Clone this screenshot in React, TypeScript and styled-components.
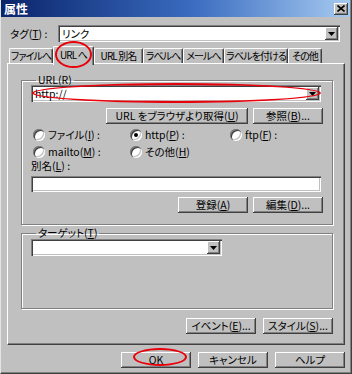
import styled, { createGlobalStyle } from "styled-components";

const FACE = "#C0C0C0";
const SHADOW = "#808080";
const DARK = "#404040";
const LIGHT = "#FFFFFF";
const RED = "#E8000B";

const GlobalStyle = createGlobalStyle`
  body { margin: 0; background: ${FACE}; }
  * { box-sizing: border-box; }
`;

const Window = styled.div`
  position: relative;
  width: 352px;
  height: 374px;
  background: ${FACE};
  border-left: 1px solid #e4e4e4;
  border-right: 1px solid ${DARK};
  border-bottom: 1px solid ${DARK};
  box-shadow: inset -1px -1px 0 ${SHADOW};
  font-family: "Noto Sans CJK JP", "Liberation Sans", sans-serif;
  font-feature-settings: "palt" 1;
  font-size: 10.5px;
  line-height: 12px;
  color: #000;
  display: flex;
  flex-direction: column;
  overflow: hidden;
`;

const TitleBar = styled.div`
  height: 17px;
  margin-right: 1px;
  display: flex;
  align-items: center;
  justify-content: space-between;
  padding: 0 2px 0 3px;
  background: linear-gradient(to right, #0a246a 0%, #3a6cc0 55%, #a6caf0 100%);
  color: ${LIGHT};
  font-size: 12px;
  font-weight: bold;
`;

const CloseButton = styled.div`
  width: 14px;
  height: 12px;
  background: ${FACE};
  display: flex;
  align-items: center;
  justify-content: center;
  box-shadow: inset -1px -1px 0 ${DARK}, inset 1px 1px 0 ${LIGHT},
    inset -2px -2px 0 ${SHADOW};
`;

const Body = styled.div`
  display: flex;
  flex-direction: column;
  padding: 0 6px 0 6px;
`;

const TagRow = styled.div`
  display: flex;
  align-items: center;
  margin-top: 8px;
  padding-left: 3px;
`;

const TagLabel = styled.span`
  width: 48px;
`;

const Combo = styled.div<{ $width: number }>`
  width: ${(p) => p.$width}px;
  height: 17px;
  display: flex;
  align-items: stretch;
  padding: 2px;
  background: ${LIGHT};
  box-shadow: inset 1px 1px 0 ${SHADOW}, inset 2px 2px 0 ${DARK},
    inset -1px -1px 0 ${LIGHT}, inset -2px -2px 0 ${FACE};
`;

const ComboText = styled.div`
  flex: 1;
  padding-left: 2px;
  display: flex;
  align-items: center;
  white-space: nowrap;
`;

const ArrowButton = styled.div`
  width: 13px;
  background: ${FACE};
  display: flex;
  align-items: center;
  justify-content: center;
  box-shadow: inset -1px -1px 0 ${DARK}, inset 1px 1px 0 ${LIGHT},
    inset -2px -2px 0 ${SHADOW};
`;

const TabStrip = styled.div`
  display: flex;
  align-items: flex-end;
  height: 17px;
  margin-top: 4px;
  padding-left: 2px;
  position: relative;
  z-index: 1;
`;

const Tab = styled.div<{ $width: number; $active?: boolean }>`
  width: ${(p) => p.$width}px;
  height: ${(p) => (p.$active ? 19 : 15)}px;
  margin-bottom: ${(p) => (p.$active ? -2 : 0)}px;
  display: flex;
  align-items: center;
  justify-content: center;
  padding-bottom: ${(p) => (p.$active ? 3 : 0)}px;
  background: ${FACE};
  border-top: 1px solid ${LIGHT};
  border-left: 1px solid ${LIGHT};
  border-right: 1px solid ${DARK};
  box-shadow: inset -1px 0 0 ${SHADOW};
  border-top-left-radius: 2px;
  border-top-right-radius: 2px;
  white-space: nowrap;
  font-size: 10px;
  letter-spacing: -0.9px;
`;

const Panel = styled.div`
  width: 338px;
  height: 282px;
  display: flex;
  flex-direction: column;
  padding: 10px 11px 0 13px;
  border-top: 1px solid ${LIGHT};
  border-left: 1px solid ${LIGHT};
  border-right: 1px solid ${DARK};
  border-bottom: 1px solid ${DARK};
  box-shadow: inset -1px -1px 0 ${SHADOW};
`;

const Group = styled.fieldset<{ $height: number }>`
  margin: 0;
  height: ${(p) => p.$height}px;
  padding: 0 9px 0 9px;
  border: 1px solid ${SHADOW};
  box-shadow: inset 1px 1px 0 ${LIGHT}, 1px 1px 0 ${LIGHT};
  display: flex;
  flex-direction: column;
  min-width: 0;
`;

const Legend = styled.legend`
  padding: 0 2px;
  margin-left: 5px;
  line-height: 12px;
`;

const Spaced = styled.div<{ $top: number }>`
  margin-top: ${(p) => p.$top}px;
`;

const ButtonRow = styled.div<{ $top: number; $gap: number }>`
  display: flex;
  justify-content: flex-end;
  gap: ${(p) => p.$gap}px;
  margin-top: ${(p) => p.$top}px;
`;

const Button = styled.div<{ $width: number }>`
  width: ${(p) => p.$width}px;
  height: 16px;
  display: flex;
  align-items: center;
  justify-content: center;
  background: ${FACE};
  box-shadow: inset -1px -1px 0 ${DARK}, inset 1px 1px 0 ${LIGHT},
    inset -2px -2px 0 ${SHADOW};
  white-space: nowrap;
`;

const RadioGrid = styled.div`
  display: grid;
  grid-template-columns: 97px 100px auto;
  grid-auto-rows: 17px;
  margin-top: 2px;
  padding-left: 2px;
`;

const RadioItem = styled.div`
  display: flex;
  align-items: center;
  gap: 3px;
`;

const RadioCircle = styled.span<{ $checked?: boolean }>`
  width: 12px;
  height: 12px;
  border-radius: 50%;
  background: ${LIGHT};
  box-shadow: inset 1px 1px 0 ${SHADOW}, inset 2px 2px 0 ${DARK},
    inset -1px -1px 0 ${LIGHT}, inset -2px -2px 0 ${FACE};
  display: flex;
  align-items: center;
  justify-content: center;

  &::after {
    content: "";
    width: 4px;
    height: 4px;
    border-radius: 50%;
    background: ${(p) => (p.$checked ? "#000" : "transparent")};
  }
`;

const TextField = styled.div<{ $width: number }>`
  width: ${(p) => p.$width}px;
  height: 16px;
  background: ${LIGHT};
  box-shadow: inset 1px 1px 0 ${SHADOW}, inset 2px 2px 0 ${DARK},
    inset -1px -1px 0 ${LIGHT}, inset -2px -2px 0 ${FACE};
`;

const Ellipse = styled.div<{ $x: number; $y: number; $w: number; $h: number }>`
  position: absolute;
  left: ${(p) => p.$x}px;
  top: ${(p) => p.$y}px;
  width: ${(p) => p.$w}px;
  height: ${(p) => p.$h}px;
  border: 2px solid ${RED};
  border-radius: 50%;
  z-index: 5;
  pointer-events: none;
`;

const Arrow = () => (
  <svg width="7" height="4" viewBox="0 0 7 4">
    <path d="M0 0h7L3.5 4z" fill="#000" />
  </svg>
);

const ComboBox = ({ width, text }: { width: number; text?: string }) => (
  <Combo $width={width}>
    <ComboText>{text}</ComboText>
    <ArrowButton>
      <Arrow />
    </ArrowButton>
  </Combo>
);

const Radio = ({ label, checked }: { label: React.ReactNode; checked?: boolean }) => (
  <RadioItem>
    <RadioCircle $checked={checked} />
    <span>{label}</span>
  </RadioItem>
);

const tabs = [
  { label: "ファイルへ", width: 44 },
  { label: "URL へ", width: 41, active: true },
  { label: "URL 別名", width: 49 },
  { label: "ラベルへ", width: 40 },
  { label: "メールへ", width: 41 },
  { label: "ラベルを付ける", width: 64 },
  { label: "その他", width: 34 },
];

const App = () => (
  <>
    <GlobalStyle />
    <Window>
      <TitleBar>
        <span>属性</span>
        <CloseButton>
          <svg width="8" height="7" viewBox="0 0 8 7">
            <path d="M0.5 0.5L7.5 6.5M7.5 0.5L0.5 6.5" stroke="#000" strokeWidth="1.6" />
          </svg>
        </CloseButton>
      </TitleBar>
      <Body>
        <TagRow>
          <TagLabel>タグ(<u>T</u>) :</TagLabel>
          <ComboBox width={282} text="リンク" />
        </TagRow>
        <TabStrip>
          {tabs.map((t) => (
            <Tab key={t.label} $width={t.width} $active={t.active}>
              {t.label}
            </Tab>
          ))}
        </TabStrip>
        <Panel>
          <Group $height={151}>
            <Legend>URL(R)</Legend>
            <Spaced $top={-1}>
              <ComboBox width={290} text="http://" />
            </Spaced>
            <ButtonRow $top={6} $gap={5}>
              <Button $width={142}>
                URL をブラウザより取得(<u>U</u>)
              </Button>
              <Button $width={70}>
                参照(<u>B</u>)...
              </Button>
            </ButtonRow>
            <RadioGrid>
              <Radio label={<>ファイル(<u>I</u>) :</>} />
              <Radio label={<>http(<u>P</u>) :</>} checked />
              <Radio label={<>ftp(<u>F</u>) :</>} />
              <Radio label={<>mailto(<u>M</u>) :</>} />
              <Radio label={<>その他(<u>H</u>)</>} />
            </RadioGrid>
            <Spaced $top={0}>
              別名(<u>L</u>) :
            </Spaced>
            <Spaced $top={4}>
              <TextField $width={290} />
            </Spaced>
            <ButtonRow $top={5} $gap={5}>
              <Button $width={70}>
                登録(<u>A</u>)
              </Button>
              <Button $width={70}>
                編集(<u>D</u>)...
              </Button>
            </ButtonRow>
          </Group>
          <Spaced $top={2}>
            <Group $height={82}>
              <Legend>
                ターゲット(<u>T</u>)
              </Legend>
              <Spaced $top={0}>
                <ComboBox width={191} />
              </Spaced>
            </Group>
          </Spaced>
          <ButtonRow $top={9} $gap={7}>
            <Button $width={70}>
              イベント(<u>E</u>)...
            </Button>
            <Button $width={70}>
              スタイル(<u>S</u>)...
            </Button>
          </ButtonRow>
        </Panel>
        <ButtonRow $top={7} $gap={7}>
          <Button $width={70}>OK</Button>
          <Button $width={70}>キャンセル</Button>
          <Button $width={70}>ヘルプ</Button>
        </ButtonRow>
      </Body>
      <Ellipse $x={54} $y={41} $w={37} $h={27} />
      <Ellipse $x={31} $y={83} $w={289} $h={20} />
      <Ellipse $x={132} $y={348} $w={54} $h={18} />
    </Window>
  </>
);

export default App;
